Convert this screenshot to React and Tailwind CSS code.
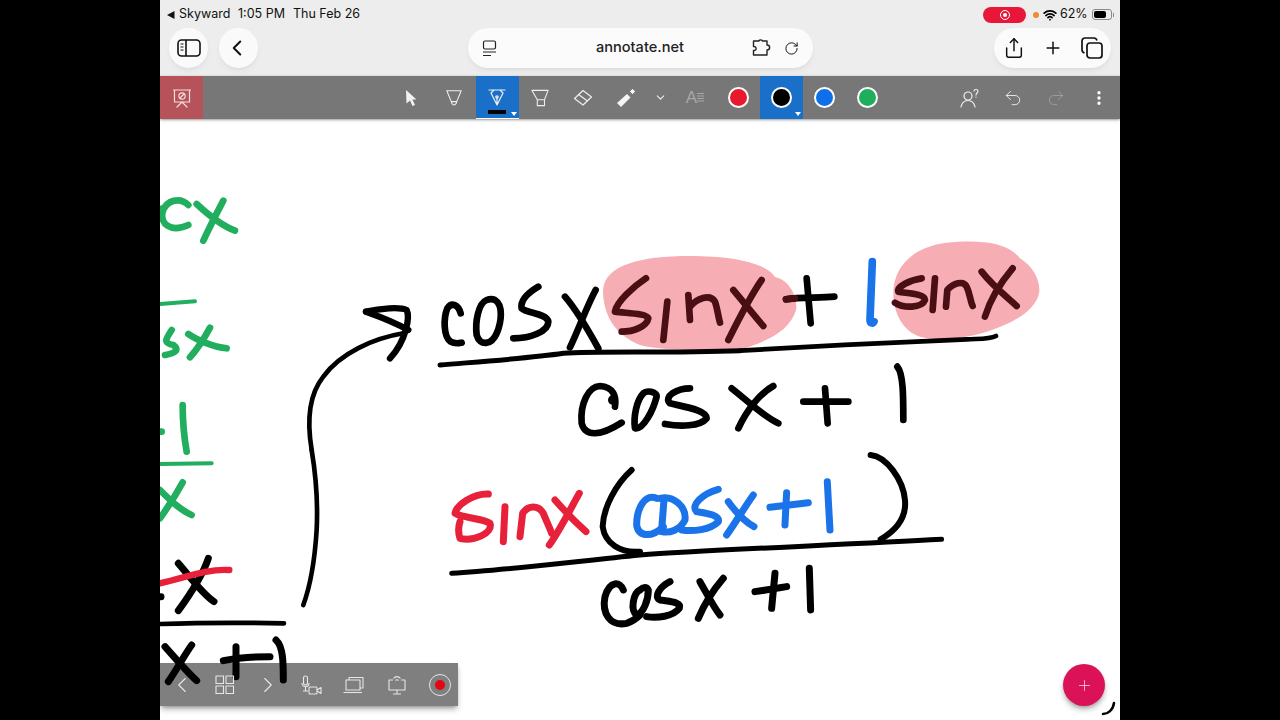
import React from 'react';
import { ChevronLeft, ChevronRight, ChevronDown, Plus, Share, RotateCw, Wifi, EllipsisVertical, Undo2, Redo2 } from 'lucide-react';

// ink strokes are noted in 3x crop units, Ink scales them back down
function Ink({ x, y, color = '#000', w = 19, d }) {
  return (
    <g transform={`translate(${x} ${y}) scale(0.3333)`} fill="none" stroke={color} strokeWidth={w} strokeLinecap="round" strokeLinejoin="round">
      {d.map((p, i) => <path key={i} d={p} />)}
    </g>
  );
}

const GREEN = '#21ae5e';
const RED = '#e8213a';
const BLUE = '#1a73e8';
const MAROON = '#4a0f14';

function Board() {
  return (
    <svg className="absolute inset-0 h-full w-full" viewBox="160 119 960 601" aria-label="handwritten working: cos x sin x + 1 sin x over cos x + 1, equals sin x (cos x + 1) over cos x + 1">
      {/* highlights */}
      <path fill="#f6adb3" d="M603 290 C605 265 640 256 690 256 C730 256 765 262 775 277 C790 280 798 298 796 310 C790 330 770 340 745 348 C700 352 660 350 640 345 C615 335 603 315 603 290Z" />
      <g transform="translate(740 230) scale(0.3333)">
        <path fill="#f6adb3" d="M460 190 C460 110 520 50 620 38 C700 30 800 30 840 85 C880 110 900 150 898 185 C890 240 820 280 740 305 C680 325 590 335 540 320 C490 305 460 250 460 190Z" />
      </g>

      {/* green column on the left */}
      <Ink x={160} y={180} color={GREEN} w={20} d={[
        'M85 75 C60 50 20 60 8 95 C0 130 30 160 85 135', 'M-10 90 L10 85',
        'M110 72 C140 100 180 135 225 152', 'M190 62 C170 100 145 150 130 182',
        'M35 450 C15 480 10 490 40 495 C60 510 45 520 15 525',
        'M85 462 C110 480 160 500 200 505', 'M150 443 C130 480 110 510 90 532',
        'M68 675 C68 720 72 770 80 815', 'M-5 755 L5 755',
      ]} />
      <Ink x={160} y={180} color={GREEN} w={12} d={['M0 372 L105 364']} />
      <Ink x={160} y={450} color={GREEN} w={12} d={['M0 42 L155 40']} />
      <Ink x={160} y={450} color={GREEN} w={20} d={['M68 97 C50 130 25 170 0 205', 'M0 120 C30 150 60 180 95 195']} />

      {/* arrow */}
      <Ink x={160} y={180} w={14} d={['M455 810 C440 720 450 640 490 590 C540 520 640 475 730 460']} />
      <Ink x={160} y={180} w={19} d={['M618 395 C660 410 710 430 745 450', 'M618 395 C660 385 720 380 740 390 C750 410 740 480 690 535']} />
      <Ink x={160} y={450} w={14} d={['M455 0 C465 60 475 140 470 240 C465 320 450 410 430 465']} />

      {/* bottom left fraction */}
      <Ink x={160} y={450} w={21} d={[
        'M55 340 C90 380 125 430 162 455', 'M145 325 C130 370 100 420 55 482', 'M0 440 L3 440',
        'M15 590 C50 630 85 670 110 692', 'M95 585 C70 620 50 660 25 695',
        'M190 632 C240 622 290 620 330 620', 'M228 590 L228 680', 'M348 570 C370 590 370 640 370 690',
      ]} />
      <Ink x={160} y={450} color={RED} w={19} d={['M0 400 C70 385 140 355 208 360']} />
      <Ink x={160} y={450} w={14} d={['M0 522 C120 518 260 518 372 520']} />

      {/* top fraction */}
      <Ink x={430} y={230} w={20} d={[
        'M92 250 C85 225 65 215 52 235 C40 265 40 320 62 335 C75 343 85 340 95 338',
        'M170 210 C145 220 135 275 140 315 C150 350 185 345 200 310 C215 275 220 225 195 210 C185 205 175 208 170 210',
        'M325 170 C300 185 270 210 275 235 C290 250 350 250 355 275 C355 305 300 325 250 325',
        'M405 200 C440 240 480 310 505 355', 'M497 180 C470 230 445 300 420 352',
        'M555 530 C560 500 550 470 510 468 C475 470 450 520 455 580 C465 620 510 620 575 578',
        'M640 490 C620 510 610 560 615 595 C640 600 670 540 680 500 C680 485 650 480 640 490',
        'M780 475 C740 475 700 500 720 520 C760 530 830 540 830 565 C810 590 750 590 705 582',
      ]} />
      <circle cx="613" cy="400" r="5" fill="#000" />
      <Ink x={430} y={230} color={MAROON} w={20} d={[
        'M648 145 C610 170 560 215 555 245 C590 250 650 250 655 265 C650 290 610 305 575 305',
        'M712 215 L700 330', 'M775 195 L780 270', 'M780 230 C800 205 840 190 855 215 C862 235 865 260 870 278',
        'M910 180 C940 215 975 260 1000 288', 'M995 150 C960 200 925 270 895 330',
      ]} />
      <Ink x={430} y={230} w={15} d={['M30 405 C150 395 300 385 400 370 C500 362 700 370 930 362']} />
      <Ink x={740} y={230} w={14} d={['M0 362 C200 350 500 335 680 328 C720 326 750 328 768 318']} />
      <Ink x={740} y={230} w={20} d={[
        'M138 208 C180 200 240 205 283 200', 'M200 145 L212 280',
        'M-25 475 C20 510 70 560 115 580', 'M100 468 C60 490 20 540 -5 595',
        'M190 515 L325 515', 'M255 475 L263 580', 'M472 410 C490 430 490 500 490 570',
      ]} />
      <Ink x={740} y={230} color={MAROON} w={20} d={[
        'M138 208 L165 205',
        'M545 145 C510 150 470 170 475 185 C500 190 555 190 555 210 C545 235 490 235 465 218',
        'M585 145 L578 240', 'M618 230 L622 180 C640 160 670 150 680 170 C690 190 690 210 698 228',
        'M725 125 C760 170 800 200 830 228', 'M818 115 C780 160 750 210 735 260',
      ]} />
      <Ink x={740} y={230} color={BLUE} w={23} d={['M397 95 L390 270 C390 280 398 282 402 275']} />

      {/* second fraction */}
      <Ink x={440} y={450} color={RED} w={21} d={[
        'M145 132 C100 130 50 165 45 190 C70 205 130 205 150 220 C160 250 100 275 60 265 C55 250 55 230 60 215',
        'M195 170 L190 275', 'M240 260 L248 190 C265 165 295 165 310 190 C320 215 330 235 335 250',
        'M345 150 C380 190 410 220 438 245', 'M418 130 C395 170 360 240 328 285',
      ]} />
      <Ink x={440} y={450} w={18} d={[
        'M575 60 C530 100 490 170 488 230 C495 280 540 310 600 305',
        'M1292 15 C1340 20 1390 90 1395 150 C1400 200 1370 240 1322 268',
      ]} />
      <Ink x={440} y={450} color={BLUE} w={21} d={[
        'M650 145 C615 130 590 175 590 225 C595 265 640 260 670 230',
        'M660 145 C700 135 740 170 735 210 C720 240 690 250 665 245', 'M672 150 L665 240',
        'M835 118 C790 130 750 165 770 185 C800 190 840 195 835 215 C810 240 760 245 725 240',
        'M865 155 C890 190 915 215 942 230', 'M940 135 C915 170 885 220 860 255',
        'M990 172 L1105 158', 'M1040 128 L1035 225', 'M1162 95 L1170 240',
      ]} />
      <Ink x={440} y={450} w={15} d={['M35 370 C200 360 400 335 600 315 C800 300 1200 285 1505 268']} />
      <Ink x={440} y={450} w={21} d={[
        'M550 420 C540 395 510 390 495 440 C485 490 510 530 560 520 C575 515 590 505 600 495',
        'M600 420 C580 430 570 480 590 495 C610 490 625 450 625 420 C620 410 610 410 600 420',
        'M690 395 C660 410 640 440 660 450 C690 455 725 455 718 475 C700 500 650 505 620 500',
        'M780 395 C800 430 820 470 840 495', 'M850 385 C820 420 790 470 775 505',
        'M945 425 C980 420 1010 415 1040 410', 'M1005 370 L995 475', 'M1108 355 L1112 480',
      ]} />

      <path d="M1114 703 C1113 710 1108 714 1103 714" fill="none" stroke="#000" strokeWidth="2.5" strokeLinecap="round" />
    </svg>
  );
}

function StatusBar() {
  return (
    <div className="flex h-[28px] items-center justify-between pl-[6px] pr-[6px] pt-[1px] text-[12.5px] text-[#111] [font-family:Inter,sans-serif]">
      <div className="flex items-center">
        <svg width="10" height="10" viewBox="0 0 10 10" className="mr-[3px]"><path d="M1 5 L8.5 1 V9Z" fill="#111" /></svg>
        <span className="w-[59px]">Skyward</span>
        <span className="w-[55px]">1:05 PM</span>
        <span>Thu Feb 26</span>
      </div>
      <div className="flex items-center">
        <div className="flex h-[16px] w-[43px] items-center justify-center rounded-full bg-[#e8173a]">
          <div className="flex h-[10px] w-[10px] items-center justify-center rounded-full border border-white">
            <div className="h-[4px] w-[4px] rounded-full bg-white" />
          </div>
        </div>
        <div className="ml-[7px] h-[6px] w-[6px] rounded-full bg-[#f08a30]" />
        <Wifi size={14} strokeWidth={3} className="ml-[4px] text-black" />
        <span className="ml-[3px] w-[30px]">62%</span>
        <div className="ml-[2px] flex h-[11px] w-[20px] items-center rounded-[3px] border border-[#8a8a8a] p-[1px]">
          <div className="h-full w-[12px] rounded-[2px] bg-black" />
        </div>
        <div className="ml-[1px] h-[4px] w-[1px] bg-[#8a8a8a]" />
      </div>
    </div>
  );
}

function NavBar() {
  return (
    <div className="grid h-[48px] grid-cols-[1fr_345px_1fr] pl-[9px] pr-[9px] pb-[8px]">
      <div className="flex gap-[11px]">
        <button className="flex h-[40px] w-[39px] items-center justify-center rounded-full bg-[#fafafa] shadow-md shadow-black/5">
          <svg width="24" height="20" viewBox="0 0 24 20" fill="none" stroke="#111" strokeWidth="1.6">
            <rect x="1" y="2" width="22" height="16" rx="3.5" />
            <path d="M9 2 V18" />
            <path d="M3.5 6 H6.5 M3.5 9 H6.5 M3.5 12 H6.5" strokeWidth="1.2" />
          </svg>
        </button>
        <button className="flex h-[40px] w-[39px] items-center justify-center rounded-full bg-[#fafafa] shadow-md shadow-black/5">
          <ChevronLeft size={26} strokeWidth={1.8} className="-ml-[3px] text-[#111]" />
        </button>
      </div>
      <div className="grid h-[40px] grid-cols-[1fr_auto_1fr] items-center rounded-full bg-[#fbfbfb] pl-[14px] pr-[14px] shadow-md shadow-black/5">
        <svg width="15" height="17" viewBox="0 0 15 17" fill="none" stroke="#222" strokeWidth="1.2">
          <rect x="1.5" y="1" width="12" height="8" rx="1.5" />
          <path d="M1 12 H14 M1 15.5 H9" />
        </svg>
        <span className="text-[14.6px] font-medium text-[#222] [font-family:Inter,sans-serif]">annotate.net</span>
        <div className="flex items-center justify-end gap-[12px]">
          <svg width="20" height="18" viewBox="0 0 20 18" fill="none" stroke="#222" strokeWidth="1.4" strokeLinejoin="round">
            <path d="M1.5 2 H7 C7 0.5 10.5 0.5 10.5 2 H15 V6 C18.5 6 18.5 11 15 11 V16 H1.5 V11.5 C5 12 5 7 1.5 7.5Z" />
          </svg>
          <RotateCw size={15} strokeWidth={1.6} className="text-[#111]" />
        </div>
      </div>
      <div className="flex justify-end">
        <div className="flex h-[40px] w-[117px] items-center justify-between rounded-full bg-[#fbfbfb] pl-[9px] pr-[8px] shadow-md shadow-black/5">
          <Share size={22} strokeWidth={1.6} className="text-[#111]" />
          <Plus size={20} strokeWidth={1.8} className="text-[#111]" />
          <svg width="22" height="22" viewBox="0 0 22 22" fill="none" stroke="#111" strokeWidth="1.7">
            <rect x="6" y="6" width="15" height="15" rx="3" />
            <path d="M3.5 16 C2 15.5 1 14.5 1 13 V4 C1 2.2 2.2 1 4 1 H13 C14.5 1 15.5 2 16 3.5" />
          </svg>
        </div>
      </div>
    </div>
  );
}

function ToolButton({ children, active, caret, wide = 'w-[43px]' }) {
  return (
    <div className={`relative flex h-full shrink-0 items-center justify-center ${wide} ${active ? 'bg-[#1a6fc8]' : ''}`}>
      {children}
      {caret && <div className="absolute bottom-[3px] right-[2px] h-0 w-0 border-x-[3px] border-t-[4px] border-x-transparent border-t-white" />}
    </div>
  );
}

function Swatch({ color, active }) {
  return (
    <ToolButton active={active} caret={active}>
      <div className={`h-[21px] w-[21px] rounded-full border-2 border-white ${color}`} />
    </ToolButton>
  );
}

function TopToolbar() {
  const line = { fill: 'none', stroke: '#eee', strokeWidth: 1.2, strokeLinejoin: 'round', strokeLinecap: 'round' };
  return (
    <div className="flex h-[43px] items-center bg-[#777777] shadow-sm shadow-black/30">
      <ToolButton>
        <div className="absolute inset-0 bg-[#b5525a]" />
        <svg width="20" height="20" viewBox="0 0 20 20" className="relative" {...line} stroke="#f6dcdc">
          <path d="M1.5 2 H18.5 M2.5 2 V14 H17.5 V2 M10 14 L5 19 M10 14 L15 19" />
          <circle cx="10" cy="8" r="3.2" />
          <path d="M8 10 L12 6" />
        </svg>
      </ToolButton>
      <div className="w-[207px]" />
      <ToolButton>
        <svg width="14" height="18" viewBox="0 0 14 18"><path d="M2 1 L12.5 10.5 H8.4 L11 16 L8.5 17 L6 11.4 L2.5 14.5Z" fill="#f2f2f2" /></svg>
      </ToolButton>
      <ToolButton>
        <svg width="18" height="20" viewBox="0 0 20 20" {...line}><path d="M2 2 H18 L13 14 C12 19 8 19 7 14Z M7 14 H13" /></svg>
      </ToolButton>
      <ToolButton active caret>
        <div className="absolute inset-x-0 bottom-0 h-[1px] bg-white" />
        <svg width="18" height="17" viewBox="0 0 18 17" {...line}>
          <path d="M1 1 H17 M3 4 L9 16 L15 4 L12 1 M3 4 L6 1 M9 16 V8" />
          <circle cx="9" cy="8" r="1.2" />
        </svg>
        <div className="absolute bottom-[5px] left-[12px] h-[4px] w-[18px] bg-black" />
      </ToolButton>
      <ToolButton>
        <svg width="18" height="20" viewBox="0 0 20 20" {...line}><path d="M1 1.5 H19 L15 12 V18.5 H7 V12Z M7 12 H15" /></svg>
      </ToolButton>
      <ToolButton>
        <svg width="20" height="18" viewBox="0 0 20 18" {...line}><path d="M10 1.5 L18.5 8 L10 16 L1.5 9.5Z M5.5 5.5 L14.5 12" /></svg>
      </ToolButton>
      <ToolButton>
        <svg width="20" height="20" viewBox="0 0 20 20">
          <path d="M1 15 L11 6 L14.5 9.5 L5 19Z" fill="#f4f4f4" />
          <path d="M16.5 1 V6 M14 3.5 H19 M14.8 1.8 L18.2 5.2 M18.2 1.8 L14.8 5.2" stroke="#f4f4f4" strokeWidth="1" />
        </svg>
      </ToolButton>
      <ToolButton wide="w-[26px]"><ChevronDown size={13} className="text-[#eee]" /></ToolButton>
      <ToolButton>
        <div className="flex items-center text-[#a8a8a8]">
          <span className="text-[17px] leading-none [font-family:'Liberation_Sans',sans-serif]">A</span>
          <svg width="7" height="11" viewBox="0 0 7 11" stroke="currentColor" strokeWidth="1"><path d="M0 1.5 H7 M0 4 H7 M0 6.5 H7 M0 9 H7" /></svg>
        </div>
      </ToolButton>
      <Swatch color="bg-[#e8192c]" />
      <Swatch color="bg-black" active />
      <Swatch color="bg-[#0f6fe8]" />
      <Swatch color="bg-[#1fae5c]" />
      <div className="w-[66px]" />
      <ToolButton>
        <svg width="22" height="20" viewBox="0 0 22 20" {...line}>
          <circle cx="9" cy="8" r="4" />
          <path d="M2 19 C3 14 6 12.5 9 12.5 C12 12.5 15 14 16 19" />
          <path d="M15 3 C15 1 19 1 19 3 C19 5 17 5 17 7 M17 9 V9.2" />
        </svg>
      </ToolButton>
      <ToolButton><Undo2 size={20} strokeWidth={1.1} className="text-[#eee]" /></ToolButton>
      <ToolButton><Redo2 size={20} strokeWidth={1.1} className="text-[#a0a0a0]" /></ToolButton>
      <ToolButton><EllipsisVertical size={18} strokeWidth={2.4} className="text-white" /></ToolButton>
    </div>
  );
}

function BottomToolbar() {
  const line = { fill: 'none', stroke: '#e6e6e6', strokeWidth: 1.1, strokeLinejoin: 'round' };
  return (
    <div className="absolute bottom-[14px] left-0 flex h-[43px] w-[298px] items-center bg-black/50 shadow-md shadow-black/30">
      <ToolButton><ChevronLeft size={26} strokeWidth={1} className="text-[#e6e6e6]" /></ToolButton>
      <ToolButton>
        <svg width="20" height="20" viewBox="0 0 20 20" {...line}>
          <rect x="1" y="1" width="7.5" height="7.5" /><rect x="11" y="1" width="7.5" height="7.5" />
          <rect x="1" y="11" width="7.5" height="7.5" /><rect x="11" y="11" width="7.5" height="7.5" />
        </svg>
      </ToolButton>
      <ToolButton><ChevronRight size={26} strokeWidth={1} className="text-[#e6e6e6]" /></ToolButton>
      <ToolButton>
        <svg width="22" height="20" viewBox="0 0 22 20" {...line}>
          <rect x="3.5" y="1" width="4" height="9" rx="2" />
          <path d="M2 8 C2 13 9 13 9 8 M5.5 12 V16 M3 16 H8" />
          <rect x="9" y="12" width="8" height="7" rx="1" />
          <path d="M17 15 L21 12.5 V18.5 L17 16" />
        </svg>
      </ToolButton>
      <ToolButton>
        <svg width="22" height="18" viewBox="0 0 22 18" {...line}>
          <path d="M6 4 V1.5 H20 V12 H17" />
          <rect x="3" y="4" width="14" height="10" />
          <path d="M0.5 16.5 H19" />
        </svg>
      </ToolButton>
      <ToolButton>
        <svg width="20" height="20" viewBox="0 0 20 20" {...line}>
          <path d="M6 5 H2 V15 H18 V5 H14 M10 15 V19 M6 19 H14" />
          <path d="M6.5 3.5 C8.5 1 11.5 1 13.5 3.5 M8.5 5.5 C9.5 4.5 10.5 4.5 11.5 5.5" />
        </svg>
      </ToolButton>
      <ToolButton>
        <div className="flex h-[22px] w-[22px] items-center justify-center rounded-full border border-[#e6e6e6]">
          <div className="h-[10px] w-[10px] rounded-full bg-[#e30613]" />
        </div>
      </ToolButton>
    </div>
  );
}

export default function App() {
  return (
    <div className="flex h-screen w-full justify-center overflow-hidden bg-black">
      <div className="flex w-[960px] flex-col bg-white">
        <div className="h-[76px] shrink-0 bg-[#ededed]">
          <StatusBar />
          <NavBar />
        </div>
        <TopToolbar />
        <div className="relative flex-1 overflow-hidden">
          <Board />
          <BottomToolbar />
          <button className="absolute bottom-[14px] right-[15px] flex h-[42px] w-[42px] items-center justify-center rounded-full bg-[#dc1259] shadow-md shadow-black/30">
            <Plus size={17} strokeWidth={1.2} className="text-[#ffd0e0]" />
          </button>
        </div>
      </div>
    </div>
  );
}
